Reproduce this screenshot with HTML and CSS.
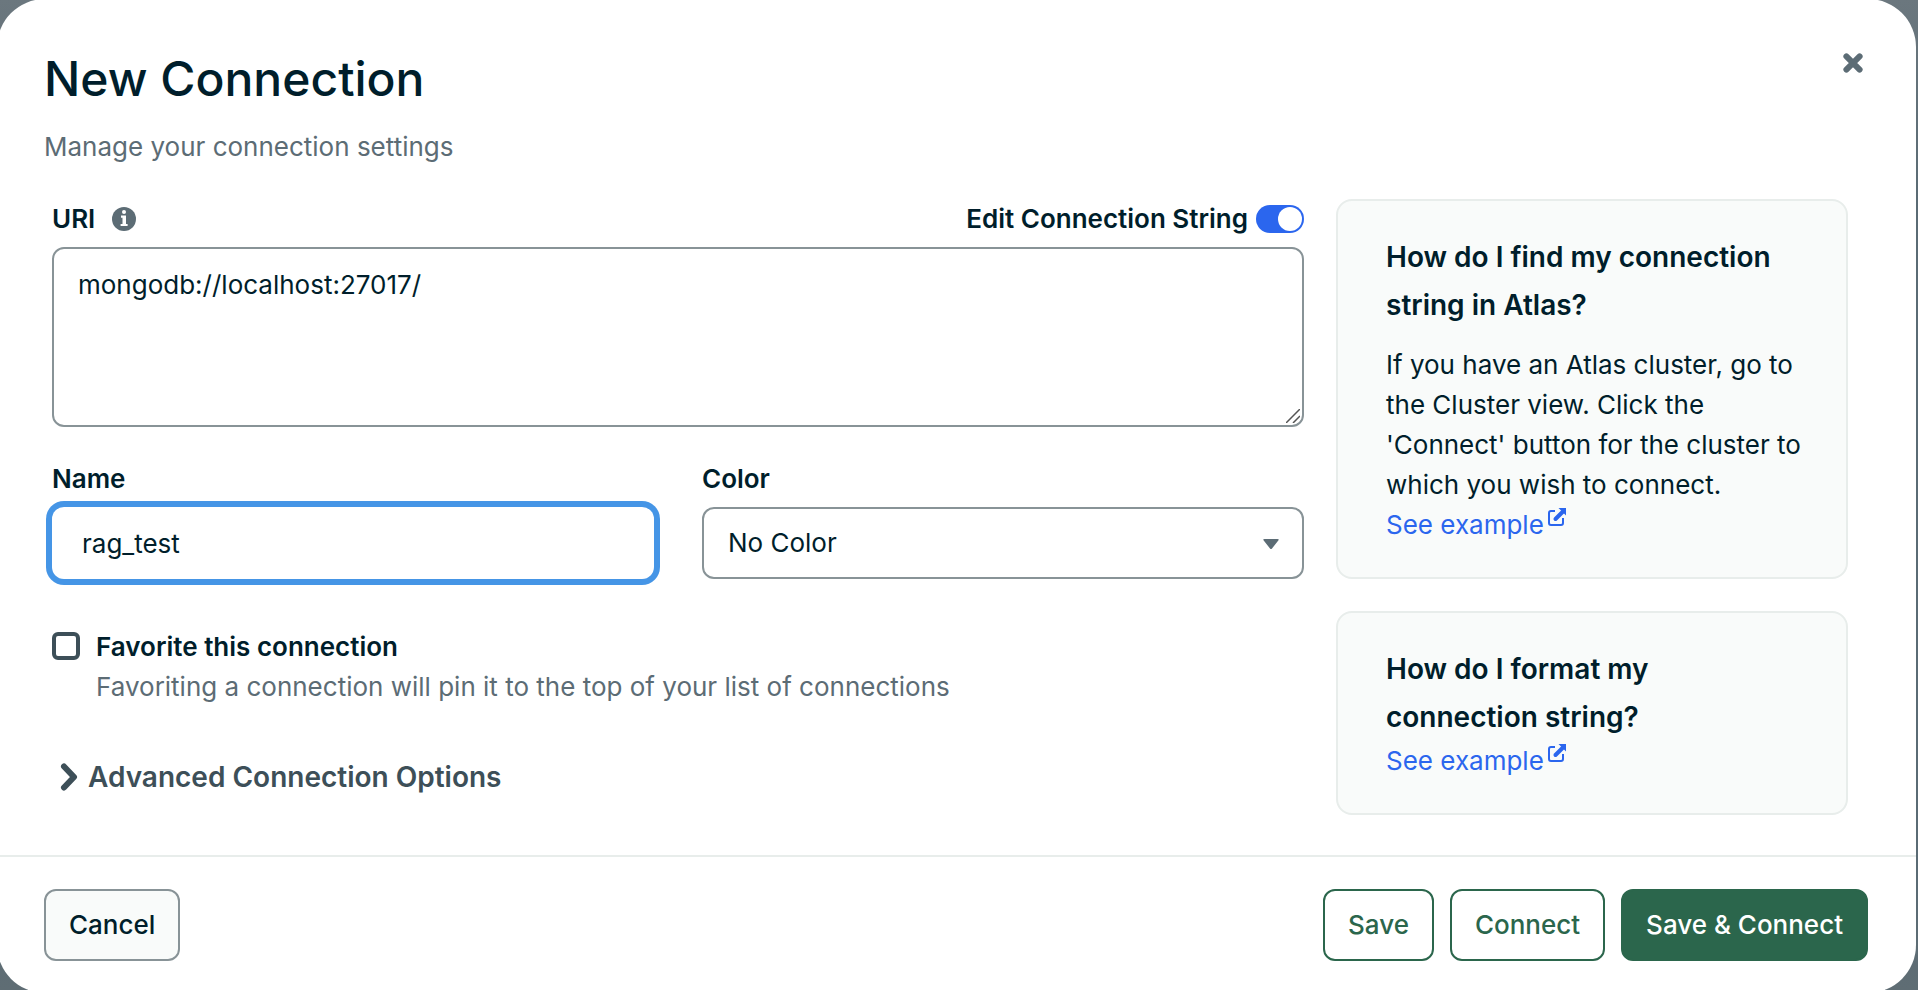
FILE: index.html
```html
<!DOCTYPE html>
<html lang="en">
<head>
    <meta charset="UTF-8">
    <meta name="viewport" content="width=device-width, initial-scale=1.0">
    <title>New Connection</title>

    <link rel="stylesheet" href="styles.css">
</head>
<body>

    <form class="modal">
        <header class="modal-header">
            <div>
                <h1>New Connection</h1>
                <p class="subtitle">Manage your connection settings</p>
            </div>
            <button type="button" class="close" aria-label="Close">
                <svg viewBox="0 0 20 20" width="20" height="20"><path d="M3.4 3.4 16.6 16.6M16.6 3.4 3.4 16.6"/></svg>
            </button>
        </header>

        <div class="modal-body">
            <div class="settings">
                <div class="uri-row">
                    <label for="uri">URI</label>
                    <svg class="info" viewBox="0 0 24 24" width="24" height="24">
                        <circle cx="12" cy="12" r="12"/>
                        <circle class="mark" cx="12" cy="5" r="2"/>
                        <path class="mark" d="M9 8.600h5v8.400h1.600v2H8.600v-2h1.900v-6.200H9z"/>
                    </svg>
                    <label class="edit-label" for="editUri">Edit Connection String</label>
                    <input class="toggle" type="checkbox" role="switch" id="editUri" checked>
                </div>
                <div class="uri-box">
                    <textarea id="uri" spellcheck="false">mongodb://localhost:27017/</textarea>
                    <svg class="grip" viewBox="0 0 14 14" width="14" height="14"><path d="M0 14 14 0M7 14 14 7"/></svg>
                </div>

                <div class="field-row">
                    <div class="field">
                        <label for="name">Name</label>
                        <input class="name" type="text" id="name" value="rag_test" spellcheck="false">
                    </div>
                    <div class="field">
                        <label for="color">Color</label>
                        <div class="select-box">
                            <select id="color">
                                <option>No Color</option>
                            </select>
                            <svg class="caret" viewBox="0 0 16 10" width="16" height="10"><path d="M1.500 0h13q2 0 .8 1.500L9 9.400q-1 1.100-2 0L.7 1.500Q-.5 0 1.500 0z"/></svg>
                        </div>
                    </div>
                </div>

                <div class="favorite">
                    <input type="checkbox" id="favorite">
                    <div>
                        <label for="favorite">Favorite this connection</label>
                        <p>Favoriting a connection will pin it to the top of your list of connections</p>
                    </div>
                </div>

                <button type="button" class="advanced">
                    <svg viewBox="0 0 20 28" width="20" height="28"><path d="M4 3.500 14 14 4 24.500"/></svg>
                    Advanced Connection Options
                </button>
            </div>

            <aside class="help">
                <section class="card">
                    <h2>How do I find my connection string in Atlas?</h2>
                    <p>If you have an Atlas cluster, go to the Cluster view. Click the 'Connect' button for the cluster to which you wish to connect.</p>
                    <a href="#">See example<svg viewBox="0 0 18 18" width="18" height="18"><path d="M7 3H3q-2 0-2 2v10q0 2 2 2h10q2 0 2-2v-5"/><path class="shaft" d="M7.500 11 15 3.500"/><path class="head" d="M10.500 0H18v7.500z"/></svg></a>
                </section>
                <section class="card">
                    <h2>How do I format my connection string?</h2>
                    <a href="#">See example<svg viewBox="0 0 18 18" width="18" height="18"><path d="M7 3H3q-2 0-2 2v10q0 2 2 2h10q2 0 2-2v-5"/><path class="shaft" d="M7.500 11 15 3.500"/><path class="head" d="M10.500 0H18v7.500z"/></svg></a>
                </section>
            </aside>
        </div>

        <footer class="modal-footer">
            <button type="button" class="btn cancel">Cancel</button>
            <button type="button" class="btn">Save</button>
            <button type="button" class="btn">Connect</button>
            <button type="submit" class="btn primary">Save &amp; Connect</button>
        </footer>
    </form>

</body>
</html>
```

FILE: styles.css
```css
* {
    box-sizing: border-box;
}

body {
    font-family: Inter, 'Liberation Sans', sans-serif;
    font-size: 26px;
    line-height: 40px;
    color: #001e2b;
    background: linear-gradient(#6b777e, #5a6b74 20%, #5a6b74 90%, #5f6d74);
    margin: 0;
    height: 100vh;
    overflow: hidden;
}

h1, h2, p {
    margin: 0;
}

button, input, textarea, select {
    font: inherit;
    color: inherit;
    margin: 0;
}

label {
    font-weight: 600;
}

.modal {
    display: flex;
    flex-direction: column;
    min-height: calc(100vh + 4px);
    margin: -1px 2px 0 -3px;
    background-color: #fff;
    border-radius: 48px;
}

.modal-header {
    display: flex;
    justify-content: space-between;
    align-items: flex-start;
    padding: 48px 53px 0 47px;
}

h1 {
    font-size: 48px;
    font-weight: 500;
    line-height: 64px;
}

.subtitle {
    margin-top: 16px;
    color: #5c6c75;
}

.close {
    display: flex;
    padding: 6px 0;
    border: none;
    background: none;
    cursor: pointer;
}

.close path {
    stroke: #5c6c75;
    stroke-width: 6;
    stroke-linecap: round;
}

.modal-body {
    display: flex;
    gap: 32px;
    flex: 1;
    padding: 32px 68px 40px 55px;
}

.settings {
    flex: 1;
}

.uri-row {
    display: flex;
    align-items: center;
}

.info {
    margin-left: 17px;
    fill: #5c6c75;
}

.info .mark {
    fill: #fff;
}

.edit-label {
    margin-left: auto;
}

.toggle {
    appearance: none;
    width: 48px;
    height: 28px;
    margin-left: 8px;
    padding: 2px;
    border-radius: 14px;
    background-color: #2b66ee;
    cursor: pointer;
}

.toggle::before {
    content: '';
    display: block;
    width: 24px;
    height: 24px;
    border-radius: 50%;
    background-color: #fff;
}

.toggle:checked::before {
    margin-left: auto;
}

.uri-box {
    position: relative;
    margin-top: 8px;
}

textarea {
    display: block;
    width: 100%;
    height: 180px;
    padding: 16px 24px;
    border: 2px solid #889397;
    border-radius: 12px;
    background-color: #fff;
    outline: none;
    resize: none;
}

.grip {
    position: absolute;
    right: 4px;
    bottom: 4px;
}

.grip path {
    fill: none;
    stroke: #555;
    stroke-width: 1.5;
}

.field-row {
    display: grid;
    grid-template-columns: 1fr 1fr;
    gap: 48px;
    margin-top: 32px;
}

.field label {
    display: block;
    margin-bottom: 8px;
}

.name {
    display: block;
    width: 100%;
    height: 72px;
    padding: 0 30px;
    border: none;
    border-radius: 12px;
    outline: none;
    box-shadow: 0 0 0 6px #4595e6;
}

.select-box {
    position: relative;
}

select {
    display: block;
    appearance: none;
    width: 100%;
    height: 72px;
    padding: 0 24px;
    border: 2px solid #889397;
    border-radius: 12px;
    background-color: #fff;
}

.caret {
    position: absolute;
    right: 25px;
    top: 32px;
    fill: #5c6c75;
    pointer-events: none;
}

.favorite {
    display: flex;
    align-items: flex-start;
    gap: 16px;
    margin-top: 48px;
}

.favorite input {
    appearance: none;
    width: 28px;
    height: 28px;
    margin-top: 5px;
    border: 4px solid #3d4f58;
    border-radius: 6px;
    background-color: #fff;
}

.favorite input:checked {
    background-color: #3d4f58;
}

.favorite p {
    color: #5c6c75;
}

.advanced {
    display: flex;
    align-items: center;
    gap: 8px;
    margin-top: 50px;
    padding: 0 8px;
    border: none;
    background: none;
    color: #3d4f58;
    font-size: 28px;
    font-weight: 600;
    cursor: pointer;
}

.advanced path {
    fill: none;
    stroke: #3d4f58;
    stroke-width: 6;
    stroke-linecap: round;
    stroke-linejoin: round;
}

.help {
    display: flex;
    flex-direction: column;
    gap: 32px;
    width: 512px;
}

.card {
    padding: 32px 40px 32px 48px;
    border: 2px solid #e8edeb;
    border-radius: 16px;
    background-color: #f9fbfa;
}

h2 {
    font-size: 28px;
    font-weight: 600;
    line-height: 48px;
}

.card p {
    margin-top: 16px;
}

a {
    color: #2b66ee;
    text-decoration: none;
}

a svg {
    margin-left: 4px;
    vertical-align: 8px;
}

a path {
    fill: none;
    stroke: #2b66ee;
    stroke-width: 2;
}

a .shaft {
    stroke-width: 4;
    stroke-linecap: round;
}

a .head {
    fill: #2b66ee;
    stroke: none;
}

.modal-footer {
    display: flex;
    gap: 16px;
    padding: 32px 48px 32px 47px;
    border-top: 2px solid #e8edeb;
}

.btn {
    height: 72px;
    padding: 0 23px;
    border: 2px solid #2b664c;
    border-radius: 12px;
    background-color: #fff;
    color: #2b664c;
    font-weight: 500;
    cursor: pointer;
}

.btn.cancel {
    margin-right: auto;
    border-color: #889397;
    background-color: #f9fbfa;
    color: #001e2b;
}

.btn.primary {
    background-color: #2b664c;
    color: #fff;
}
```
